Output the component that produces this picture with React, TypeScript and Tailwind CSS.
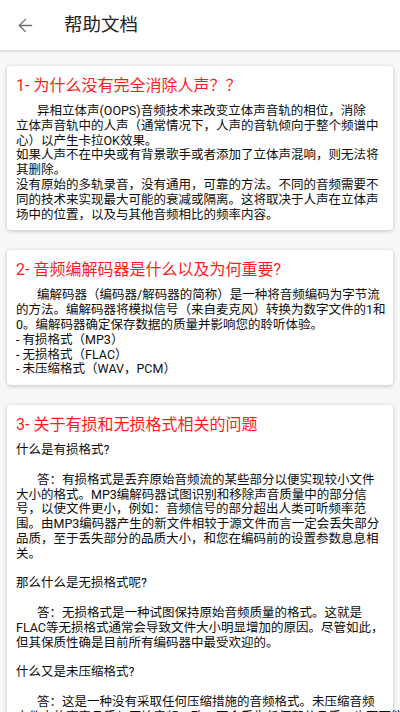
import { ArrowLeft } from "lucide-react"

type Section = {
  title: string
  // each entry is one visual line; "" is a blank line, a leading "\t" marks an indented line
  lines: string[]
}

const SECTIONS: Section[] = [
  {
    title: "1- 为什么没有完全消除人声？？",
    lines: [
      "\t异相立体声(OOPS)音频技术来改变立体声音轨的相位，消除",
      "立体声音轨中的人声（通常情况下，人声的音轨倾向于整个频谱中",
      "心）以产生卡拉OK效果。",
      "如果人声不在中央或有背景歌手或者添加了立体声混响，则无法将",
      "其删除。",
      "没有原始的多轨录音，没有通用，可靠的方法。不同的音频需要不",
      "同的技术来实现最大可能的衰减或隔离。这将取决于人声在立体声",
      "场中的位置，以及与其他音频相比的频率内容。",
    ],
  },
  {
    title: "2- 音频编解码器是什么以及为何重要?",
    lines: [
      "\t编解码器（编码器/解码器的简称）是一种将音频编码为字节流",
      "的方法。编解码器将模拟信号（来自麦克风）转换为数字文件的1和",
      "0。编解码器确定保存数据的质量并影响您的聆听体验。",
      "- 有损格式（MP3）",
      "- 无损格式（FLAC）",
      "- 未压缩格式（WAV，PCM）",
    ],
  },
  {
    title: "3- 关于有损和无损格式相关的问题",
    lines: [
      "什么是有损格式?",
      "",
      "\t答：有损格式是丢弃原始音频流的某些部分以便实现较小文件",
      "大小的格式。MP3编解码器试图识别和移除声音质量中的部分信",
      "号，以使文件更小，例如：音频信号的部分超出人类可听频率范",
      "围。由MP3编码器产生的新文件相较于源文件而言一定会丢失部分",
      "品质，至于丢失部分的品质大小，和您在编码前的设置参数息息相",
      "关。",
      "",
      "那么什么是无损格式呢?",
      "",
      "\t答：无损格式是一种试图保持原始音频质量的格式。这就是",
      "FLAC等无损格式通常会导致文件大小明显增加的原因。尽管如此，",
      "但其保质性确是目前所有编码器中最受欢迎的。",
      "",
      "什么又是未压缩格式?",
      "",
      "\t答：这是一种没有采取任何压缩措施的音频格式。未压缩音频",
      "文件中的声音品质与原始音频一致，不会丢失任何部分品质，也不可能",
      "被进一步还原得更好，但文件体积通常也是最大的。",
    ],
  },
]

function Line({ text }: { text: string }) {
  if (text === "") return <div className="h-[14.8px]" />
  const indented = text.startsWith("\t")
  return (
    <div className="whitespace-nowrap">
      {indented && <span className="inline-block w-[21px]" />}
      {indented ? text.slice(1) : text}
    </div>
  )
}

function HelpCard({ section }: { section: Section }) {
  return (
    <div className="rounded-[4px] bg-white px-[9px] pt-[9px] pb-[8px] shadow-[0_1px_4px_rgba(0,0,0,0.22)]">
      <div className="mb-[7px] text-[16px] leading-[22px] text-[#ff1c1c]">
        {section.title}
      </div>
      <div className="text-[12.5px] leading-[14.8px] text-[#0d0d0d]">
        {section.lines.map((l, i) => (
          <Line key={i} text={l} />
        ))}
      </div>
    </div>
  )
}

export default function App() {
  return (
    <div className="flex h-[712px] w-full flex-col overflow-hidden bg-[#f7f7f7] font-['Roboto','Noto_Sans_CJK_SC',sans-serif]">
      <header className="z-10 flex h-[50px] shrink-0 items-center bg-white shadow-[0_1px_3px_rgba(0,0,0,0.16)]">
        <button
          type="button"
          aria-label="返回"
          className="ml-[15px] flex size-[21px] items-center justify-center text-[#707070]"
        >
          <ArrowLeft className="size-[21px]" strokeWidth={1.6} />
        </button>
        <h1 className="ml-[28px] text-[18.5px] leading-none text-[#222]">帮助文档</h1>
      </header>
      <main className="flex-1 overflow-y-auto">
        <div className="flex flex-col gap-[20px] px-[7px] pt-[16px] pb-[20px]">
          {SECTIONS.map((s) => (
            <HelpCard key={s.title} section={s} />
          ))}
        </div>
      </main>
    </div>
  )
}
